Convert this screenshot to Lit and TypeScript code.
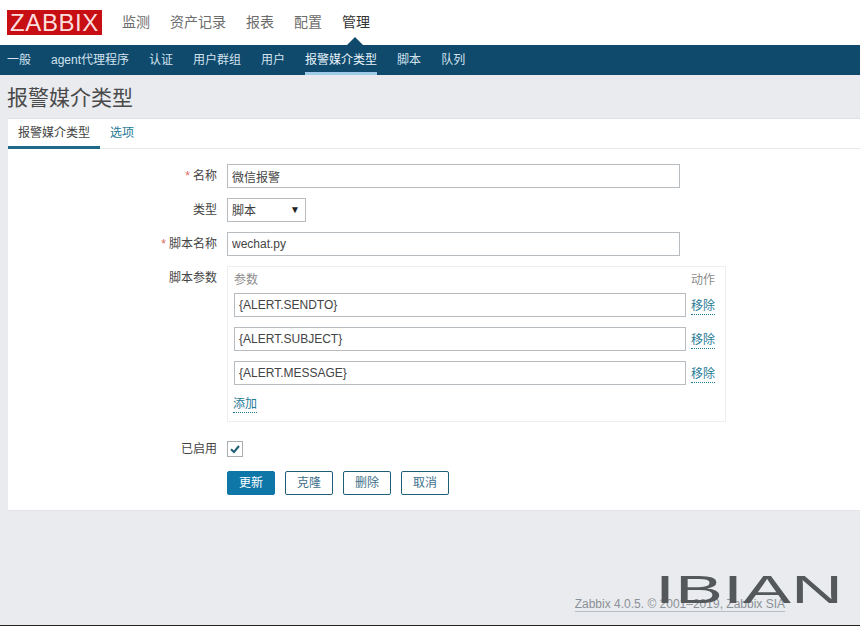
import { LitElement, html, css } from "lit";
import { customElement } from "lit/decorators.js";

const TOP = ["监测", "资产记录", "报表", "配置", "管理"];
const SUB = ["一般", "agent代理程序", "认证", "用户群组", "用户", "报警媒介类型", "脚本", "队列"];
const PARAMS = ["{ALERT.SENDTO}", "{ALERT.SUBJECT}", "{ALERT.MESSAGE}"];

@customElement("app-root")
export class AppRoot extends LitElement {
  static styles = css`
    :host {
      display: flex;
      flex-direction: column;
      position: relative;
      width: 860px;
      height: 626px;
      overflow: hidden;
      background: #e9ebef;
      color: #3c3c3c;
      font: 12px/16px "Liberation Sans", "Noto Sans CJK SC", sans-serif;
    }
    .top {
      height: 45px;
      flex: none;
      background: #fff;
      display: flex;
      align-items: center;
      padding-left: 7px;
    }
    .logo {
      width: 95px;
      height: 25px;
      background: #c70e12;
      color: #fbdede;
      font-size: 24px;
      line-height: 25px;
      text-align: center;
      letter-spacing: 0.6px;
      margin-right: 20px;
      margin-top: -1px;
    }
    .top-nav { display: flex; gap: 20px; font-size: 14px; color: #6c6c6c; margin-top: -1px; }
    .top-nav .on { color: #333; position: relative; }
    .top-nav .on::after {
      content: "";
      position: absolute;
      left: 5px;
      top: 23px;
      border: 8px solid transparent;
      border-top: 0;
      border-bottom-color: #0f4a6d;
    }
    .sub {
      height: 30px;
      flex: none;
      box-sizing: border-box;
      background: #0f4a6d;
      display: flex;
      gap: 20px;
      padding-left: 7px;
      color: #d3e3ee;
      line-height: 30px;
    }
    .sub span { height: 30px; box-sizing: border-box; }
    .sub .on { color: #e8f3fa; border-bottom: 3px solid #9fcbe8; }
    h1 {
      margin: 0;
      height: 43px;
      flex: none;
      box-sizing: border-box;
      padding: 10px 0 0 7px;
      font-size: 21px;
      line-height: 25px;
      font-weight: 400;
      color: #4a4a4a;
    }
    .card {
      flex: none;
      height: 393px;
      box-sizing: border-box;
      margin-left: 8px;
      background: #fff;
      border-top: 1px solid #dde1e4;
      border-bottom: 1px solid #e2e5e8;
    }
    .tabs {
      height: 30px;
      box-sizing: border-box;
      display: flex;
      border-bottom: 1px solid #e6e8ea;
    }
    .tab { padding: 6px 10px 0; height: 30px; box-sizing: border-box; color: #1f7a96; }
    .tab.on { color: #444; border-bottom: 3px solid #1f6a8a; }
    .form {
      display: grid;
      grid-template-columns: 209px 1fr;
      column-gap: 10px;
      row-gap: 10px;
      padding-top: 15px;
      align-items: start;
    }
    label { text-align: right; line-height: 24px; color: #444; }
    label i { font-style: normal; color: #d96a5a; margin-right: 3px; }
    input {
      box-sizing: border-box;
      height: 24px;
      border: 1px solid #b6bcbf;
      padding: 0 4px;
      font: inherit;
      color: #444;
      background: #fff;
      display: block;
      outline: none;
    }
    .wide { width: 453px; }
    .select {
      box-sizing: border-box;
      width: 79px;
      height: 24px;
      border: 1px solid #b6bcbf;
      padding: 2px 5px 0 4px;
      display: flex;
      justify-content: space-between;
      align-items: center;
    }
    .select b { font-size: 10px; font-weight: 400; color: #222; margin-top: -3px; }
    .params {
      box-sizing: border-box;
      width: 499px;
      height: 156px;
      margin-bottom: 5px;
      border: 1px solid #eceef0;
      padding: 5px 10px 0 6px;
      display: grid;
      grid-template-columns: 452px 24px;
      grid-template-rows: 11px repeat(4, 24px);
      column-gap: 5px;
      row-gap: 10px;
      align-items: center;
    }
    .params .head { color: #8c8c8c; height: 16px; align-self: start; }
    .params input { width: 452px; }
    a {
      color: #1f7a96;
      border-bottom: 1px dotted #1f7a96;
      line-height: 15px;
      justify-self: start;
      margin-top: 3px;
    }
    a.add { align-self: start; margin-top: 2px; margin-left: -1px; }
    .check {
      box-sizing: border-box;
      width: 16px;
      height: 16px;
      border: 1px solid #a9aeb2;
      margin-top: 4px;
      display: flex;
    }
    .check svg { display: block; }
    .btns { display: flex; gap: 10px; }
    button {
      box-sizing: border-box;
      width: 48px;
      height: 24px;
      padding: 0;
      border: 1px solid #1f5c78;
      border-radius: 2px;
      background: #fff;
      color: #40708a;
      font: inherit;
    }
    button.primary { background: #0f76a8; border-color: #0f76a8; color: #fff; }
    footer {
      flex: 1;
      text-align: right;
      padding: 85px 75px 0 0;
      color: #8b9196;
    }
    footer span { border-bottom: 1px solid #b9c0c5; }
    .mark {
      position: absolute;
      left: 654px;
      top: 566px;
      display: block;
    }
    .mark text {
      font: 400 39px "Liberation Sans", sans-serif;
      fill: #55585b;
    }
    .edge {
      position: absolute;
      left: 0;
      right: 0;
      bottom: 0;
      height: 1px;
      background: #222;
    }
  `;

  render() {
    return html`
      <div class="top">
        <div class="logo">ZABBIX</div>
        <div class="top-nav">
          ${TOP.map((t) => html`<span class=${t === "管理" ? "on" : ""}>${t}</span>`)}
        </div>
      </div>
      <div class="sub">
        ${SUB.map((t) => html`<span class=${t === "报警媒介类型" ? "on" : ""}>${t}</span>`)}
      </div>
      <h1>报警媒介类型</h1>
      <div class="card">
        <div class="tabs">
          <div class="tab on">报警媒介类型</div>
          <div class="tab">选项</div>
        </div>
        <div class="form">
          <label><i>*</i>名称</label>
          <input class="wide" .value=${"微信报警"} />
          <label>类型</label>
          <div class="select"><span>脚本</span><b>▼</b></div>
          <label><i>*</i>脚本名称</label>
          <input class="wide" .value=${"wechat.py"} />
          <label>脚本参数</label>
          <div class="params">
            <div class="head">参数</div>
            <div class="head">动作</div>
            ${PARAMS.map((p) => html`<input .value=${p} /><a>移除</a>`)}
            <a class="add">添加</a>
          </div>
          <label>已启用</label>
          <div class="check">
            <svg width="14" height="14" viewBox="0 0 14 14">
              <path d="M3 7.2 L6 10 L11 4" fill="none" stroke="#1f5c78" stroke-width="2" />
            </svg>
          </div>
          <span></span>
          <div class="btns">
            <button class="primary">更新</button>
            <button>克隆</button>
            <button>删除</button>
            <button>取消</button>
          </div>
        </div>
      </div>
      <footer><span>Zabbix 4.0.5. © 2001–2019, Zabbix SIA</span></footer>
      <svg class="mark" width="190" height="44" viewBox="0 0 190 44">
        <text x="1" y="37" textLength="188" lengthAdjust="spacingAndGlyphs">IBIAN</text>
      </svg>
      <div class="edge"></div>
    `;
  }
}
